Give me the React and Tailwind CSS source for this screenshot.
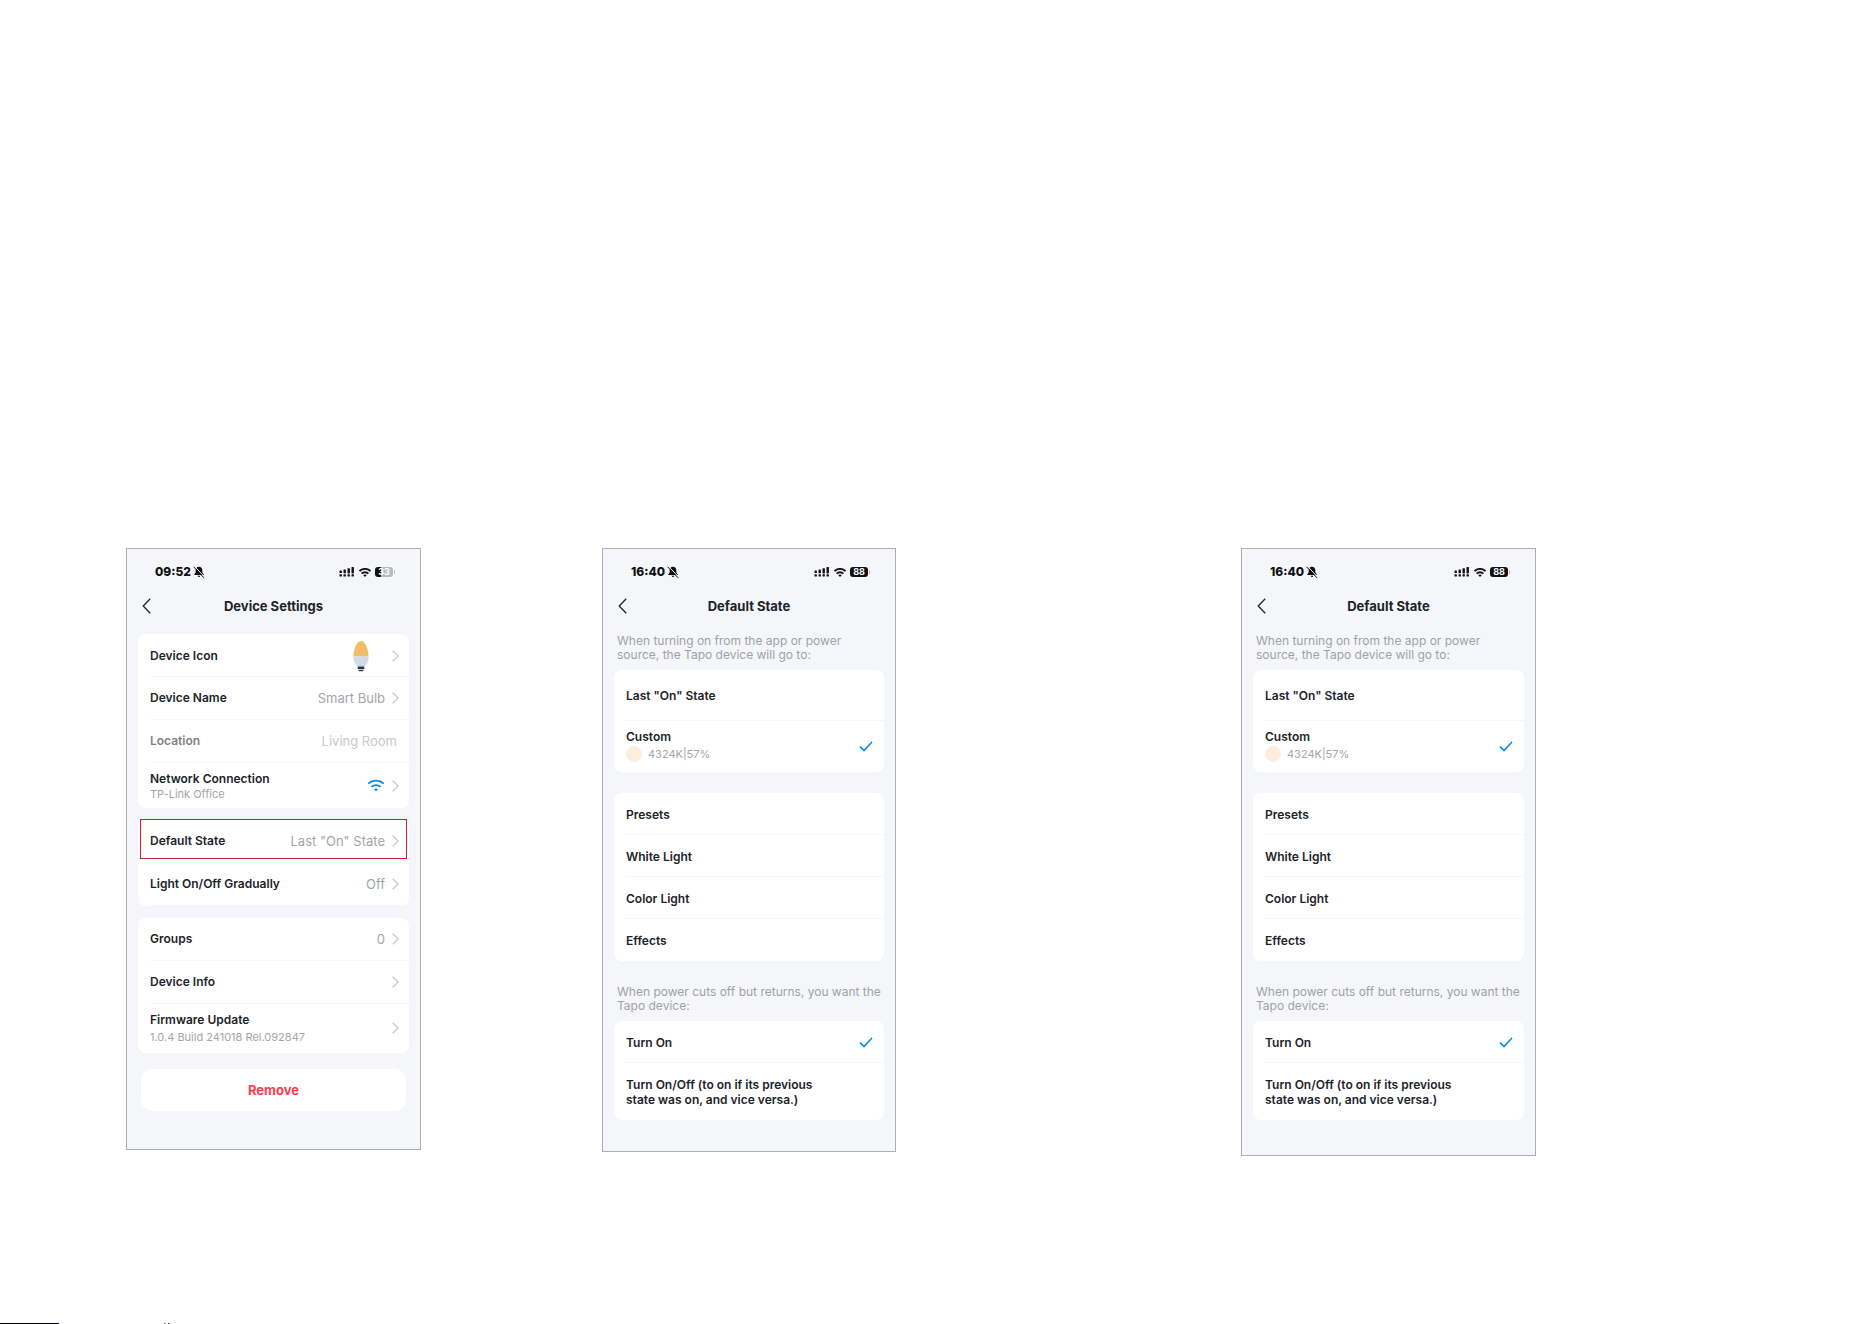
import React, { useState } from "react";

const BellOffIcon = () => (
  <svg viewBox="0 0 12 12" className="w-3 h-3" aria-hidden="true">
    <path
      d="M6 .8C4 .8 2.700 2.200 2.700 4v2.200L1.200 8.400v.6h9.600v-.6L9.300 6.200V4C9.300 2.200 8 .8 6 .8z"
      fill="#111"
    />
    <path d="M4.600 9.800h2.800c-.2.800-.7 1.200-1.400 1.200s-1.200-.4-1.400-1.200z" fill="#111" />
    <path d="M1.800.6l9.800 10.400" stroke="#f5f6fa" strokeWidth="1" />
    <path d="M.9 1.100l9.800 10.400" stroke="#111" strokeWidth="1" strokeLinecap="round" />
  </svg>
);

const SignalIcon = () => (
  <svg viewBox="0 0 16 10" className="w-4 h-[10px]" fill="#111" aria-hidden="true">
    <rect x="0.500" y="3.500" width="2.400" height="2.600" rx="0.600" />
    <rect x="4.500" y="2.500" width="2.400" height="3.800" rx="0.600" />
    <rect x="8.500" y="1.200" width="2.400" height="5.200" rx="0.600" />
    <rect x="12.500" y="0" width="2.400" height="6.400" rx="0.600" />
    <rect x="0.500" y="7.200" width="2.400" height="2.400" rx="0.600" />
    <rect x="4.500" y="7.200" width="2.400" height="2.400" rx="0.600" />
    <rect x="8.500" y="7.200" width="2.400" height="2.400" rx="0.600" />
    <rect x="12.500" y="7.200" width="2.400" height="2.400" rx="0.600" />
  </svg>
);

const StatusWifiIcon = () => (
  <svg viewBox="0 0 12 9" className="w-3 h-[9px]" fill="none" aria-hidden="true">
    <path d="M.5 3.200C3.600.1 8.400.1 11.500 3.200" stroke="#111" strokeWidth="1.900" />
    <path d="M2.600 5.600c1.800-1.800 5-1.800 6.800 0" stroke="#111" strokeWidth="1.800" />
    <path d="M6 9L4.100 7.100c1-.9 2.800-.9 3.800 0z" fill="#111" />
  </svg>
);

const WifiIcon = () => (
  <svg viewBox="0 0 18 13" className="w-[18px] h-[13px]" fill="none" aria-hidden="true">
    <path d="M1.300 4.600c4.300-4 11.100-4 15.400 0" stroke="#0f8ce9" strokeWidth="1.700" />
    <path d="M4.400 7.800c2.600-2.300 6.600-2.300 9.200 0" stroke="#0f8ce9" strokeWidth="1.700" />
    <path d="M9 12.300l-2-2c1.100-1 2.900-1 4 0z" fill="#0f8ce9" />
  </svg>
);

const Battery = ({ level }) => (
  <div className="flex items-center">
    <div
      className={`flex items-center justify-center w-[18px] h-[10px] rounded-[3px] text-[9px] leading-[10px] font-bold text-white ${
        level > 50 ? "bg-[#111]" : "bg-linear-to-r from-[#111] from-33% to-[#b9babe] to-33%"
      }`}
    >
      {level}
    </div>
    <div className="w-px h-1 ml-px rounded-r bg-[#b9babe]" />
  </div>
);

const BulbIcon = () => (
  <svg viewBox="0 0 16 32" className="w-4 h-8" aria-hidden="true">
    <path d="M.4 16.500C.4 9 4 1 8 1s7.600 8 7.600 15.500z" fill="#f2bd68" />
    <path d="M.4 16.500h15.200c0 5-1.800 8.200-4.200 10.100H4.600C2.200 24.700.4 21.500.4 16.500z" fill="#d3dae6" />
    <path d="M4.700 26.600h6.600v1.600l-.8 1h-5l-.8-1z" fill="#25354a" />
    <path d="M5.700 30h4.600v1.200H5.700z" fill="#25354a" />
  </svg>
);

const Chevron = () => (
  <svg viewBox="0 0 7 12" className="w-[7px] h-3 shrink-0" fill="none" aria-hidden="true">
    <path d="M.7.8L6.200 6 .7 11.200" stroke="#c3c5c8" strokeWidth="1.200" />
  </svg>
);

const CheckIcon = () => (
  <svg viewBox="0 0 14 11" className="w-[14px] h-[11px] shrink-0" fill="none" aria-hidden="true">
    <path d="M1 5.600l4 4L13 1" stroke="#0f8ce9" strokeWidth="1.700" />
  </svg>
);

const Phone = ({ time, battery, title, className, children }) => (
  <section className={`border border-[#adafb2] bg-[#f5f6fa] px-[11px] pt-[15px] ${className}`}>
    <div className="flex items-center justify-between h-4 pl-[17px] pr-[14px]">
      <div className="flex items-center gap-[2px] text-[12px] leading-4 font-extrabold text-[#111]">
        {time}
        <BellOffIcon />
      </div>
      <div className="flex items-center gap-1">
        <SignalIcon />
        <StatusWifiIcon />
        <Battery level={battery} />
      </div>
    </div>
    <header className="grid grid-cols-[1fr_auto_1fr] items-center h-[51px] mb-[3px]">
      <button type="button" aria-label="Back" className="justify-self-start pl-1">
        <svg viewBox="0 0 9 16" className="w-[9px] h-4" fill="none" aria-hidden="true">
          <path d="M8.200.8L1.200 8l7 7.200" stroke="#1d2429" strokeWidth="1.300" />
        </svg>
      </button>
      <h1 className="text-[13px] leading-4 font-bold text-[#1d2429]">{title}</h1>
    </header>
    {children}
  </section>
);

const Card = ({ className = "", children }) => (
  <div className={`relative rounded-lg bg-white pl-3 divide-y divide-[#f6f6f8] ${className}`}>
    {children}
  </div>
);

const SettingRow = ({ label, sub, value, icon, height = "h-[43px]", gap = "" }) => (
  <button type="button" className={`flex items-center w-full pr-[10px] text-left ${height}`}>
    <span className={`flex flex-col flex-1 ${gap}`}>
      <span className="text-[12px] leading-4 font-semibold text-[#1d2429]">{label}</span>
      {sub && <span className="text-[11px] leading-[14px] text-[#a3a6a9]">{sub}</span>}
    </span>
    {icon}
    <span className="mr-[7px] text-[13px] leading-4 text-[#a3a6a9]">{value}</span>
    <Chevron />
  </button>
);

const OptionRow = ({ label, name, checked, onSelect, height, children }) => (
  <label className={`flex items-center justify-between pr-[11px] ${height}`}>
    <input type="radio" name={name} checked={checked} onChange={onSelect} className="sr-only" />
    <span>
      <span className="block text-[12px] leading-[15px] font-semibold text-[#1d2429]">{label}</span>
      {children}
    </span>
    {checked && <CheckIcon />}
  </label>
);

const Hint = ({ children }) => (
  <p className="pl-[3px] pb-2 text-[12px] leading-[14px] text-[#9fa2a5]">{children}</p>
);

const DeviceSettings = ({ className }) => (
  <Phone time="09:52" battery={33} title="Device Settings" className={className}>
    <div className="flex flex-col gap-3">
      <Card>
        <SettingRow
          label="Device Icon"
          height="h-[43px] pt-px"
          icon={
            <span className="mr-4">
              <BulbIcon />
            </span>
          }
        />
        <SettingRow label="Device Name" value="Smart Bulb" />
        <div className="flex items-center justify-between h-[43px] pr-3 leading-4">
          <span className="text-[12px] font-semibold text-[#7d8184]">Location</span>
          <span className="text-[13px] text-[#c8cacc]">Living Room</span>
        </div>
        <SettingRow
          label="Network Connection"
          sub="TP-Link Office"
          icon={<WifiIcon />}
          height="h-[45px]"
        />
      </Card>
      <Card>
        <SettingRow label="Default State" value={'Last "On" State'} />
        <SettingRow label="Light On/Off Gradually" value="Off" />
        <div className="absolute -top-px left-[2px] right-[2px] h-10 border border-[#d0202e] pointer-events-none" />
      </Card>
      <Card>
        <SettingRow label="Groups" value="0" />
        <SettingRow label="Device Info" />
        <SettingRow
          label="Firmware Update"
          sub="1.0.4 Build 241018 Rel.092847"
          height="h-[49px] pb-[2px]"
          gap="gap-[2px]"
        />
      </Card>
    </div>
    <div className="px-[3px] pt-4">
      <button
        type="button"
        className="w-full h-[42px] pt-px rounded-xl bg-white text-[13px] font-bold text-[#ff3b50]"
      >
        Remove
      </button>
    </div>
  </Phone>
);

const DefaultState = ({ id, className }) => {
  const [turnOn, setTurnOn] = useState("custom");
  const [power, setPower] = useState("on");

  return (
    <Phone time="16:40" battery={88} title="Default State" className={className}>
      <Hint>
        When turning on from the app or power
        <br />
        source, the Tapo device will go to:
      </Hint>
      <Card>
        <OptionRow
          label={'Last "On" State'}
          name={`${id}-turn-on`}
          checked={turnOn === "last"}
          onSelect={() => setTurnOn("last")}
          height="h-[51px] pt-px"
        />
        <OptionRow
          label="Custom"
          name={`${id}-turn-on`}
          checked={turnOn === "custom"}
          onSelect={() => setTurnOn("custom")}
          height="h-[51px]"
        >
          <span className="flex items-center gap-[6px] pt-[2px] pb-[3px] text-[11px] leading-4 text-[#a3a6a9]">
            <span className="w-4 h-4 rounded-full border border-[#f4f1ef] bg-[#ffecd9]" />
            4324K|57%
          </span>
        </OptionRow>
      </Card>
      <Card className="mt-[21px]">
        {["Presets", "White Light", "Color Light", "Effects"].map((label) => (
          <button
            key={label}
            type="button"
            className="block w-full h-[42px] pt-[2px] text-left text-[12px] font-semibold text-[#1d2429]"
          >
            {label}
          </button>
        ))}
      </Card>
      <div className="mt-6">
        <Hint>
          When power cuts off but returns, you want the
          <br />
          Tapo device:
        </Hint>
      </div>
      <Card>
        <OptionRow
          label="Turn On"
          name={`${id}-power`}
          checked={power === "on"}
          onSelect={() => setPower("on")}
          height="h-[42px] pt-px"
        />
        <OptionRow
          label={
            <>
              Turn On/Off (to on if its previous
              <br />
              state was on, and vice versa.)
            </>
          }
          name={`${id}-power`}
          checked={power === "previous"}
          onSelect={() => setPower("previous")}
          height="h-[57px]"
        />
      </Card>
    </Phone>
  );
};

const App = () => (
  <div className="flex flex-col min-h-screen bg-white font-['Inter',sans-serif]">
    <main className="grid grid-cols-[126fr_295fr_181fr_294fr_345fr_295fr_336fr] items-start grow pt-[548px]">
      <DeviceSettings className="col-start-2 pb-[38px]" />
      <DefaultState id="first" className="col-start-4 pb-[31px]" />
      <DefaultState id="second" className="col-start-6 pb-[35px]" />
    </main>
    <footer className="flex h-px">
      <div className="w-[58px] bg-black" />
      <div className="w-px bg-[#2a0fb0]" />
      <div className="w-px ml-[105px] bg-[#c0392b]" />
      <div className="w-px bg-[#5cc8c8]" />
      <div className="w-px ml-[2px] bg-[#3a2020]" />
      <div className="w-px bg-[#5cc8c8]" />
    </footer>
  </div>
);

export default App;
